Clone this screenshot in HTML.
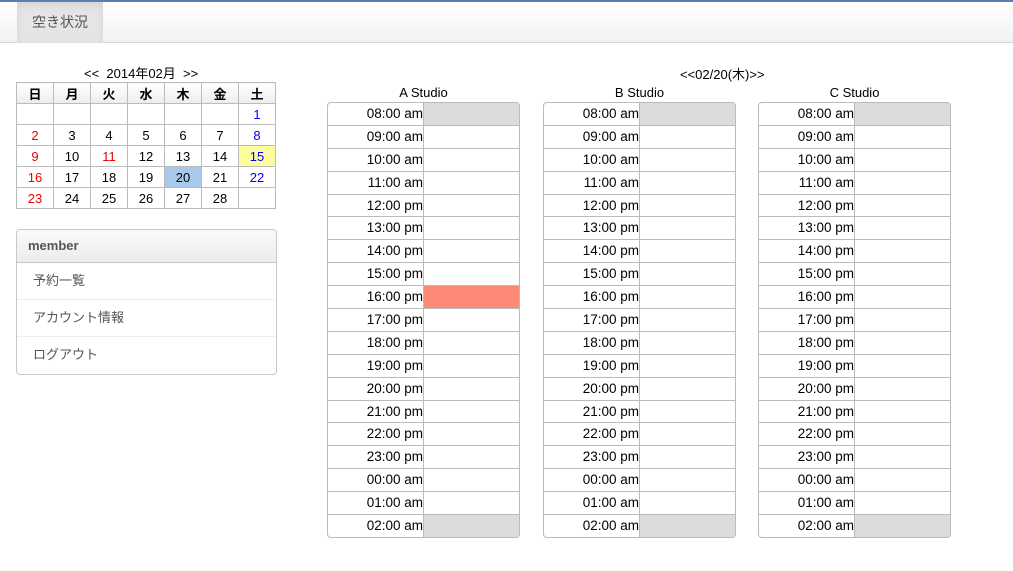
<!DOCTYPE html>
<html><head><meta charset="utf-8"><style>
*{box-sizing:border-box;margin:0;padding:0}
body{width:1013px;height:571px;background:#fff;font-family:"Liberation Sans","Noto Sans CJK JP",sans-serif;position:relative;overflow:hidden;color:#000}
.nav{position:absolute;left:0;top:0;width:1013px;height:43px;border-top:2px solid #5a7fb0;background:linear-gradient(#fff,#f2f2f2);border-bottom:1px solid #d4d4d4}
.tab{position:absolute;left:17px;top:0;width:86px;height:41px;background:#e5e5e5;box-shadow:inset 0 3px 8px rgba(0,0,0,.08);color:#555;font-size:14px;line-height:40px;text-align:center}
.cal{position:absolute;left:16px;top:82px;border-collapse:collapse;border:1px solid #bbb;font-size:13px}
.cal td{width:37px;height:21px;border:1px solid #bbb;text-align:center;padding:0}
.cal th{height:21px;border:1px solid #bbb;font-weight:bold;background:linear-gradient(#fff,#ececec);font-size:13px}
.r{color:#e00}.b{color:#00f}
.mon{position:absolute;left:84px;top:63px;font-size:13px}
.panel{position:absolute;left:16px;top:229px;width:261px;height:146px;border:1px solid #c8c8c8;border-radius:4px;overflow:hidden}
.ph{height:33px;background:linear-gradient(#fafafa,#ececec);border-bottom:1px solid #c8c8c8;font-weight:bold;color:#555;font-size:13px;line-height:32px;padding-left:11px}
.pi{height:37px;border-bottom:1px solid #eee;color:#555;font-size:13px;line-height:36px;padding-left:16px}
.st{position:absolute;top:102px;width:193px;border:1px solid #bbb;border-radius:4px;overflow:hidden}
.row{display:flex;height:22.9px;border-top:1px solid #bbb;font-size:13.5px}
.row:first-child{border-top:none;height:21.9px}
.t{width:96px;text-align:right;line-height:21px;border-right:1px solid #bbb;padding-right:0}
.c{flex:1}
.g{background:#dcdcdc}.s{background:#fd8a78}
.lab{position:absolute;top:85px;font-size:13px;width:193px;text-align:center}
</style></head><body>
<div class="nav"><div class="tab">空き状況</div></div>
<div class="mon">&lt;&lt;&nbsp; 2014年02月 &nbsp;&gt;&gt;</div>
<table class="cal">
<tr><th>日</th><th>月</th><th>火</th><th>水</th><th>木</th><th>金</th><th>土</th></tr>
<tr><td></td><td></td><td></td><td></td><td></td><td></td><td class="b">1</td></tr>
<tr><td class="r">2</td><td>3</td><td>4</td><td>5</td><td>6</td><td>7</td><td class="b">8</td></tr>
<tr><td class="r">9</td><td>10</td><td class="r">11</td><td>12</td><td>13</td><td>14</td><td class="b" style="background:#fdfda0">15</td></tr>
<tr><td class="r">16</td><td>17</td><td>18</td><td>19</td><td style="background:#a9c9ea">20</td><td>21</td><td class="b">22</td></tr>
<tr><td class="r">23</td><td>24</td><td>25</td><td>26</td><td>27</td><td>28</td><td></td></tr>
</table>
<div class="panel"><div class="ph">member</div><div class="pi">予約一覧</div><div class="pi">アカウント情報</div><div class="pi" style="border:none">ログアウト</div></div>
<div style="position:absolute;left:680px;top:64px;font-size:13px">&lt;&lt;02/20(木)&gt;&gt;</div>
<div class="lab" style="left:327px">A Studio</div>
<div class="lab" style="left:543px">B Studio</div>
<div class="lab" style="left:758px">C Studio</div>
<div id="A" class="st" style="left:327px"></div>
<div id="B" class="st" style="left:543px"></div>
<div id="C" class="st" style="left:758px"></div>
<script>
var times=["08:00 am","09:00 am","10:00 am","11:00 am","12:00 pm","13:00 pm","14:00 pm","15:00 pm","16:00 pm","17:00 pm","18:00 pm","19:00 pm","20:00 pm","21:00 pm","22:00 pm","23:00 pm","00:00 am","01:00 am","02:00 am"];
["A","B","C"].forEach(function(id){var h="";times.forEach(function(t,i){var cls="c";if(i==0||i==18)cls+=" g";if(id=="A"&&i==8)cls+=" s";h+='<div class="row"><div class="t">'+t+'</div><div class="'+cls+'"></div></div>';});document.getElementById(id).innerHTML=h;});
</script>
</body></html>
